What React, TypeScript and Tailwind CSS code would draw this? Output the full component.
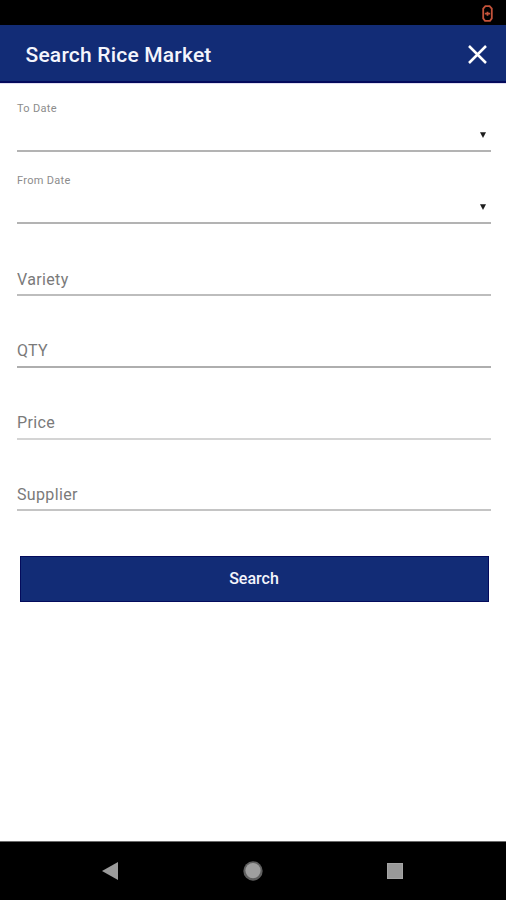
import React from 'react';

interface DateFieldProps {
    label: string;
}

interface TextFieldProps {
    label: string;
    lineClass: string;
}

const textFields: TextFieldProps[] = [
    { label: 'Variety', lineClass: 'border-[#bdbdbd] pb-[4px]' },
    { label: 'QTY', lineClass: 'border-[#aeaeae] pb-[5px]' },
    { label: 'Price', lineClass: 'border-[#d4d4d4] pb-[5px]' },
    { label: 'Supplier', lineClass: 'border-[#c4c4c4] pb-[4px]' },
];

const DateField: React.FC<DateFieldProps> = ({ label }) => (
    <button type="button" className="flex flex-col justify-end text-left border-b-2 border-[#b3b3b3]">
        <span className="text-[11px] leading-[14px] tracking-[0.3px] text-[#8c8c8c]">{label}</span>
        <span className="flex h-[34px] w-full items-center justify-end pr-[5px] pt-[4px]">
            <svg viewBox="0 0 6 6" className="h-[6px] w-[6px] fill-[#1c1c1c]">
                <path d="M0 0.3h6L3 6z" />
            </svg>
        </span>
    </button>
);

const TextField: React.FC<TextFieldProps> = ({ label, lineClass }) => (
    <label className={`flex items-end border-b-2 ${lineClass}`}>
        <input
            type="text"
            placeholder={label}
            className="h-[20px] w-full text-[16px] tracking-[0.35px] text-[#333333] outline-none placeholder:text-[#7a7a7a]"
        />
    </label>
);

const App: React.FC = () => {
    return (
        <div className="flex h-[900px] w-full flex-col bg-white font-[Roboto,sans-serif]">
            <div className="flex h-[25px] shrink-0 items-center justify-end bg-black pr-[13px] pt-[1px]">
                <svg viewBox="0 0 11 17" className="h-[17px] w-[11px]" fill="none" stroke="#c4533a" strokeWidth="1.8">
                    <path d="M3.4 1.2h4.2l2.2 2.4v9.8l-1.8 2.4H3l-1.8-2.4V3.6z" />
                    <path d="M2.8 8.7h5.4M5.5 6.7v4" />
                </svg>
            </div>

            <header className="flex h-[58px] shrink-0 items-center justify-between border-b-2 border-[#040b5c] bg-[#122c76] pl-[25.5px] pr-[19px]">
                <h1 className="pt-[6px] text-[21px] font-medium tracking-[0.2px] text-[#f4f5fc]">Search Rice Market</h1>
                <button type="button" aria-label="Close" className="pt-[2px]">
                    <svg viewBox="0 0 19 19" className="h-[19px] w-[19px]" stroke="#ffffff" strokeWidth="2.5">
                        <path d="M1 1l17 17M18 1L1 18" />
                    </svg>
                </button>
            </header>

            <form className="flex flex-1 flex-col border-t border-[#e2def2] pl-[17px] pr-[15px]">
                <div className="grid grid-rows-[68px_72px_72px_72px_72px_71px]">
                    <DateField label="To Date" />
                    <DateField label="From Date" />
                    {textFields.map(field => (
                        <TextField key={field.label} label={field.label} lineClass={field.lineClass} />
                    ))}
                </div>
                <button type="button" className="ml-[3px] mr-[2px] mt-[45px] h-[46px] border border-[#040b5c] bg-[#122c76] pr-[1px] text-[16px] font-medium text-[#f4f5fc]">
                    Search
                </button>
            </form>

            <nav className="flex h-[59px] shrink-0 items-center justify-between border-t border-[#6b6b6b] bg-black pl-[102px] pr-[103px]">
                <svg viewBox="0 0 16 18" className="h-[18px] w-[16px] fill-[#9b9b9b]">
                    <path d="M0 9L16 0v18z" />
                </svg>
                <svg viewBox="0 0 20 20" className="h-[20px] w-[20px]">
                    <circle cx="10" cy="10" r="9.7" fill="#5f5f5f" />
                    <circle cx="10" cy="9.6" r="7.6" fill="#9f9f9f" />
                </svg>
                <svg viewBox="0 0 16 16" className="h-[16px] w-[16px]">
                    <rect width="16" height="16" fill="#a5a5a5" />
                    <rect x="1" y="1" width="14" height="14" fill="#999999" />
                </svg>
            </nav>
        </div>
    );
};

export default App;
